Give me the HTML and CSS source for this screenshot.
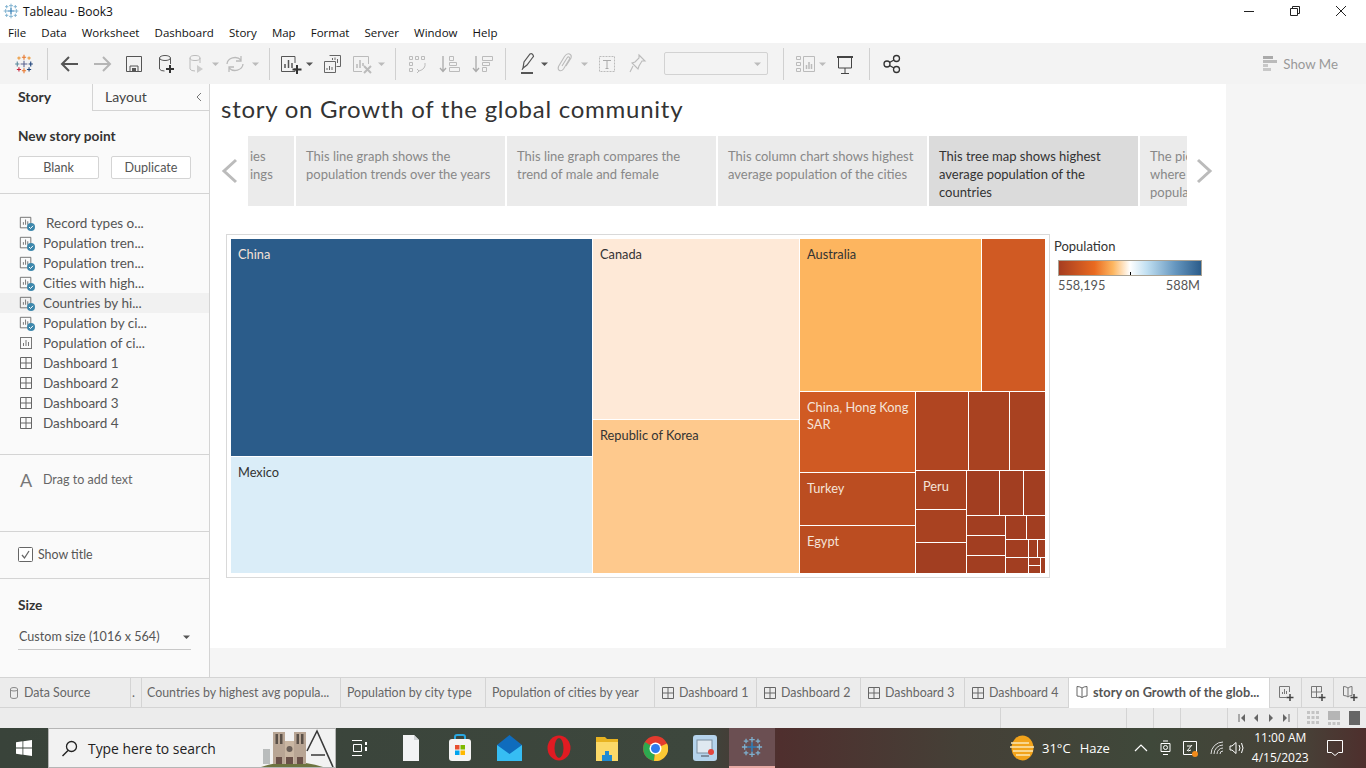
FILE: index.html
```html
<!DOCTYPE html>
<html lang="en">

<head>
  <meta charset="UTF-8">
  <title>Tableau - Book3</title>
  <link rel="stylesheet" href="styles.css">
</head>

<body>
  <svg class="defs" width="0" height="0">
    <symbol id="logo" viewBox="0 0 24 24">
      <path d="M12 1v6M9.500 4h5M12 17v6M9.500 20h5" stroke="#e8762b" stroke-width="1.300" />
      <path d="M4 9v6M1.500 12h5" stroke="#59879b" stroke-width="1.300" />
      <path d="M20 9v6M17.500 12h5" stroke="#1f447b" stroke-width="1.300" />
      <path d="M12 8v8M8 12h8" stroke="#5b6591" stroke-width="1.300" />
      <path d="M6 3v4M4 5h4M18 3v4M16 5h4" stroke="#eb912b" stroke-width="1.200" />
      <path d="M6 16v5M3.500 18.500h5" stroke="#c72037" stroke-width="1.300" />
      <path d="M18 16v5M15.500 18.500h5" stroke="#1f447b" stroke-width="1.300" />
    </symbol>
    <symbol id="blue-logo" viewBox="0 0 24 24">
      <path d="M12 1v6M9 4h6M12 17v6M9 20h6M4 9v6M1 12h6M20 9v6M17 12h6M5.500 3v5M3 5.500h5M18.500 3v5M16 5.500h5M5.500 16v5M3 18.500h5M18.500 16v5M16 18.500h5" stroke="#7eb0cf" stroke-width="1.400" />
      <path d="M12 7v10M7 12h10" stroke="#2f7cb5" stroke-width="1.800" />
    </symbol>
    <symbol id="sheet" viewBox="0 0 16 16">
      <path d="M10 13.500H1.500v-12h12V9" fill="none" stroke="#666" />
      <path d="M5 10V7M7.500 10V4M10 10V6" stroke="#666" />
    </symbol>
    <symbol id="sheet-plain" viewBox="0 0 14 14">
      <rect x="1.500" y="1.500" width="11" height="11" fill="none" stroke="#777" />
      <path d="M4.500 10V7M7 10V4M9.500 10V6" stroke="#777" />
    </symbol>
    <symbol id="grid" viewBox="0 0 14 14">
      <path d="M1.500 1.500h11v11h-11zM7 1.500v11M1.500 7h11" fill="none" stroke="#666" />
    </symbol>
    <symbol id="caret" viewBox="0 0 8 8">
      <path d="M0 2.500h7L3.500 6z" fill="currentColor" />
    </symbol>
    <symbol id="tick" viewBox="0 0 8 8">
      <circle cx="4" cy="4" r="4" fill="#3d87ab" />
      <path d="M2 4l1.500 1.500L6 2.800" fill="none" stroke="#fff" />
    </symbol>
  </svg>

  <header class="titlebar">
    <svg class="title-logo" width="16" height="16"><use href="#blue-logo" /></svg>
    <span class="title-text">Tableau - Book3</span>
    <div class="window-btns">
      <svg width="12" height="12" viewBox="0 0 12 12"><path d="M1 6.500h10" stroke="#222" /></svg>
      <svg width="12" height="12" viewBox="0 0 12 12"><path d="M1.500 3.500h7v7h-7zM3.500 3.500v-2h7v7h-2" fill="none" stroke="#222" /></svg>
      <svg width="12" height="12" viewBox="0 0 12 12"><path d="M1 1l10 10M11 1L1 11" stroke="#222" /></svg>
    </div>
  </header>

  <nav class="menubar">
    <span>File</span><span>Data</span><span>Worksheet</span><span>Dashboard</span><span>Story</span><span>Map</span><span>Format</span><span>Server</span><span>Window</span><span>Help</span>
  </nav>

  <div class="toolbar">
    <svg class="tool" viewBox="-7 -7 38 38"><use href="#logo" width="24" height="24" /></svg>
    <i class="sep ml7"></i>
    <svg class="tool ml6" viewBox="0 0 32 32"><path d="M24 16H9M15 9l-7 7 7 7" fill="none" stroke="#555" stroke-width="2" /></svg>
    <svg class="tool" viewBox="0 0 32 32"><path d="M8 16h15M17 9l7 7-7 7" fill="none" stroke="#b5b5b5" stroke-width="2" /></svg>
    <svg class="tool" viewBox="0 0 32 32"><path d="M8.500 8.500h15v15h-15zM12 23v-5h8v5" fill="none" stroke="#555" /><path d="M14 20h4v3h-4z" fill="#555" /></svg>
    <svg class="tool" viewBox="0 0 32 32"><ellipse cx="15" cy="10" rx="5.500" ry="2.500" fill="none" stroke="#555" /><path d="M9.500 10v11q1 2 5 2M20.500 10v6" fill="none" stroke="#555" /><path d="M20 17v8M16 21h8" stroke="#333" stroke-width="2" /></svg>
    <svg class="tool mln2" viewBox="0 0 32 32"><ellipse cx="15" cy="10" rx="5" ry="2.500" fill="none" stroke="#bbb" /><path d="M10 10v11q1 2 5 2M20 10v5" fill="none" stroke="#bbb" /><path d="M17 17l6 4-6 4z" fill="#ccc" /></svg>
    <svg class="caret off"><use href="#caret" /></svg>
    <svg class="tool mln1" viewBox="0 0 32 32"><path d="M8 16a8 7 0 0 1 14-4M24 16a8 7 0 0 1-14 4M22 8v5h-5M10 24v-5h5" fill="none" stroke="#bbb" stroke-width="1.300" /></svg>
    <svg class="caret off ml1"><use href="#caret" /></svg>
    <i class="sep ml9"></i>
    <svg class="tool ml4" viewBox="0 0 32 32"><path d="M21 20v3.500H7.500v-15h13.500V15" fill="none" stroke="#555" /><path d="M11 20v-4M14.500 20v-8M18 20v-5" stroke="#555" stroke-width="1.500" /><path d="M23 17v9M18.500 21.500h9" stroke="#333" stroke-width="2" /></svg>
    <svg class="caret"><use href="#caret" /></svg>
    <svg class="tool ml2" viewBox="0 0 32 32"><path d="M13.500 7.500h11v11h-4M8.500 13.500h11v11h-11z" fill="#f3f3f3" stroke="#666" /><path d="M16.500 12V10M19 12V9.500M21.500 15V11M11 22v-2M13.500 22v-4M16 22v-3" stroke="#666" /></svg>
    <svg class="tool mln3" viewBox="0 0 32 32"><path d="M17 23.500H8.500v-15h15V16" fill="none" stroke="#bbb" /><path d="M12 20v-4M15 20v-8M18 18v-3" stroke="#bbb" stroke-width="1.500" /><path d="M19 18l7 7M26 18l-7 7" stroke="#bbb" stroke-width="2" /></svg>
    <svg class="caret off ml1"><use href="#caret" /></svg>
    <i class="sep ml9"></i>
    <svg class="tool ml5" viewBox="0 0 32 32"><path d="M8.500 8.500h3v3h-3zM14.500 8.500h3v3h-3zM20.500 8.500h3v3h-3zM8.500 14.500h3v3h-3zM8.500 20.500h3v3h-3zM24 15q1 6-6 8M16 21l2 2-2 2" fill="none" stroke="#bbb" /></svg>
    <svg class="tool" viewBox="0 0 32 32"><path d="M10 8v15M7 20l3 3.500 3-3.500" fill="none" stroke="#aaa" stroke-width="1.300" /><path d="M16.500 8.500h4v4h-4zM16.500 14.500h7v3h-7zM16.500 19.500h10v4h-10z" fill="none" stroke="#bbb" /></svg>
    <svg class="tool ml1" viewBox="0 0 32 32"><path d="M10 8v15M7 20l3 3.500 3-3.500" fill="none" stroke="#aaa" stroke-width="1.300" /><path d="M16.500 8.500h10v4h-10zM16.500 14.500h7v3h-7zM16.500 19.500h4v4h-4z" fill="none" stroke="#bbb" /></svg>
    <i class="sep ml7"></i>
    <svg class="tool ml6" viewBox="0 0 32 32"><path d="M11 20l1-6 6-8q2-1 3 1t0 2l-6 8z" fill="none" stroke="#555" stroke-width="1.200" /><path d="M11 20l-1 2" stroke="#555" /><rect x="9" y="24" width="12" height="2" fill="#555" /></svg>
    <svg class="caret mln3"><use href="#caret" /></svg>
    <svg class="tool" viewBox="0 0 32 32"><path d="M13 18l5-8q1-1.500 2-1t.5 2l-6 10q-2 2.500-4 1.500t-1-4l6-10q2.500-3.500 5-2.500t1.500 4l-5 8" fill="none" stroke="#bbb" stroke-width="1.100" /></svg>
    <svg class="caret off"><use href="#caret" /></svg>
    <svg class="tool ml2" viewBox="0 0 32 32"><rect x="8.500" y="8.500" width="15" height="15" fill="none" stroke="#bbb" stroke-dasharray="2 1" /><path d="M12 12.500h8M16 12.500v8M14.500 20.500h3" fill="none" stroke="#aaa" /></svg>
    <svg class="tool mln2" viewBox="0 0 32 32"><path d="M18 7l6 6-3 0-3 5-1 3-6-6 3-1 4-4zM12 18l-3 6" fill="none" stroke="#bbb" stroke-width="1.100" /></svg>
    <div class="tool-select ml11"><svg class="caret off"><use href="#caret" /></svg></div>
    <i class="sep ml15"></i>
    <svg class="tool ml6" viewBox="0 0 32 32"><path d="M6.500 8.500h4v3h-4zM6.500 14.500h4v3h-4zM6.500 20.500h4v3h-4zM13.500 8.500h11v15h-11z" fill="none" stroke="#bbb" /><path d="M16.500 21v-4M19 21v-7M21.500 21v-5" stroke="#bbb" stroke-width="1.500" /></svg>
    <svg class="caret off mln3"><use href="#caret" /></svg>
    <svg class="tool ml2" viewBox="0 0 32 32"><path d="M8 9h16" stroke="#444" stroke-width="2" /><path d="M9.500 9v11h13V9M16 20v5M12 25.500h8" fill="none" stroke="#444" /></svg>
    <i class="sep ml8"></i>
    <svg class="tool ml6" viewBox="0 0 32 32"><circle cx="20.500" cy="10.500" r="3" fill="none" stroke="#333" stroke-width="1.300" /><circle cx="11" cy="16" r="3" fill="none" stroke="#333" stroke-width="1.300" /><circle cx="20.500" cy="21.500" r="3" fill="none" stroke="#333" stroke-width="1.300" /><path d="M13.500 14.500l4.500-2.500M13.500 17.500l4.500 2.500" stroke="#333" stroke-width="1.300" /></svg>
    <div class="show-me">
      <svg width="14" height="15" viewBox="0 0 14 15"><path d="M0 0h10v3H0z" fill="#aaa" /><path d="M0 4h14v3H0z" fill="#bbb" /><path d="M0 8h5v3H0z" fill="#c8c8c8" /><path d="M0 12h8v3H0z" fill="#c8c8c8" /></svg>
      <span>Show Me</span>
    </div>
  </div>

  <div class="workspace">
    <aside class="sidebar">
      <div class="side-tabs">
        <span class="side-tab active">Story</span>
        <span class="side-tab">Layout</span>
        <svg class="collapse" width="8" height="12" viewBox="0 0 8 12"><path d="M6 2L2 6l4 4" fill="none" stroke="#777" /></svg>
      </div>

      <section class="new-point">
        <h4>New story point</h4>
        <div class="new-btns">
          <button class="btn-blank">Blank</button>
          <button class="btn-dup">Duplicate</button>
        </div>
      </section>

      <section class="sheet-list">
        <div class="sheet-row"><svg class="si"><use href="#sheet" /></svg><svg class="tick"><use href="#tick" /></svg><span class="first">Record types o...</span></div>
        <div class="sheet-row"><svg class="si"><use href="#sheet" /></svg><svg class="tick"><use href="#tick" /></svg><span>Population tren...</span></div>
        <div class="sheet-row"><svg class="si"><use href="#sheet" /></svg><svg class="tick"><use href="#tick" /></svg><span>Population tren...</span></div>
        <div class="sheet-row"><svg class="si"><use href="#sheet" /></svg><svg class="tick"><use href="#tick" /></svg><span>Cities with high...</span></div>
        <div class="sheet-row hover"><svg class="si"><use href="#sheet" /></svg><svg class="tick"><use href="#tick" /></svg><span>Countries by hi...</span></div>
        <div class="sheet-row"><svg class="si"><use href="#sheet" /></svg><svg class="tick"><use href="#tick" /></svg><span>Population by ci...</span></div>
        <div class="sheet-row"><svg class="si"><use href="#sheet-plain" /></svg><span>Population of ci...</span></div>
        <div class="sheet-row"><svg class="si"><use href="#grid" /></svg><span>Dashboard 1</span></div>
        <div class="sheet-row"><svg class="si"><use href="#grid" /></svg><span>Dashboard 2</span></div>
        <div class="sheet-row"><svg class="si"><use href="#grid" /></svg><span>Dashboard 3</span></div>
        <div class="sheet-row"><svg class="si"><use href="#grid" /></svg><span>Dashboard 4</span></div>
      </section>

      <section class="drag-text">
        <span class="big-a">A</span>
        <span>Drag to add text</span>
      </section>

      <section class="show-title">
        <svg width="15" height="15" viewBox="0 0 15 15"><rect x=".5" y=".5" width="14" height="14" rx="1" fill="#fff" stroke="#666" /><path d="M4 8l2.500 3L11 4" fill="none" stroke="#666" stroke-width="1.300" /></svg>
        <span>Show title</span>
      </section>

      <section class="size-box">
        <h4>Size</h4>
        <div class="size-select">
          <span>Custom size (1016 x 564)</span>
          <svg class="caret"><use href="#caret" /></svg>
        </div>
      </section>
    </aside>

    <main class="canvas">
      <h1 class="story-title">story on Growth of the global community</h1>

      <div class="navigator">
        <svg class="nav-arrow" width="18" height="26" viewBox="0 0 18 26"><path d="M15 2L3 13l12 11" fill="none" stroke="#bbb" stroke-width="3" /></svg>
        <div class="nav-track">
          <div class="point point-start">ies<br>ings</div>
          <div class="point">This line graph shows the population trends over the years</div>
          <div class="point">This line graph compares the trend of male and female</div>
          <div class="point">This column chart shows highest average population of the cities</div>
          <div class="point current">This tree map shows highest average population of the countries</div>
          <div class="point point-end">The pie<br>where<br>popula</div>
        </div>
        <svg class="nav-arrow next" width="18" height="26" viewBox="0 0 18 26"><path d="M3 2l12 11L3 24" fill="none" stroke="#bbb" stroke-width="3" /></svg>
      </div>

      <div class="viz">
        <div class="chart-box">
          <div class="treemap row">
            <div class="col" style="flex-basis:361px">
              <div class="cell t-china" style="flex-basis:217px">China</div>
              <div class="cell t-mexico" style="flex-basis:116px">Mexico</div>
            </div>
            <div class="col" style="flex-basis:206px">
              <div class="cell t-canada" style="flex-basis:180px">Canada</div>
              <div class="cell t-korea" style="flex-basis:153px">Republic of Korea</div>
            </div>
            <div class="col" style="flex-basis:245px">
              <div class="row" style="flex-basis:152px">
                <div class="cell t-australia" style="flex-basis:181px">Australia</div>
                <div class="cell c1" style="flex-basis:63px"></div>
              </div>
              <div class="row" style="flex-basis:181px">
                <div class="col" style="flex-basis:115px">
                  <div class="cell c1" style="flex-basis:80px">China, Hong Kong SAR</div>
                  <div class="cell c2" style="flex-basis:52px">Turkey</div>
                  <div class="cell c2" style="flex-basis:47px">Egypt</div>
                </div>
                <div class="col" style="flex-basis:129px">
                  <div class="row" style="flex-basis:78px">
                    <div class="cell c3" style="flex-basis:52px"></div>
                    <div class="cell c4" style="flex-basis:40px"></div>
                    <div class="cell c4" style="flex-basis:35px"></div>
                  </div>
                  <div class="row" style="flex-basis:102px">
                    <div class="col" style="flex-basis:50px">
                      <div class="cell c4" style="flex-basis:38px">Peru</div>
                      <div class="cell c4" style="flex-basis:32px"></div>
                      <div class="cell c5" style="flex-basis:30px"></div>
                    </div>
                    <div class="col" style="flex-basis:78px">
                      <div class="row" style="flex-basis:44px">
                        <div class="cell c5" style="flex-basis:32px"></div>
                        <div class="cell c5" style="flex-basis:23px"></div>
                        <div class="cell c5" style="flex-basis:21px"></div>
                      </div>
                      <div class="row" style="flex-basis:57px">
                        <div class="col" style="flex-basis:38px">
                          <div class="cell c5" style="flex-basis:19px"></div>
                          <div class="cell c5" style="flex-basis:19px"></div>
                          <div class="cell c5" style="flex-basis:17px"></div>
                        </div>
                        <div class="col" style="flex-basis:39px">
                          <div class="row" style="flex-basis:23px">
                            <div class="cell c5" style="flex-basis:20px"></div>
                            <div class="cell c5" style="flex-basis:18px"></div>
                          </div>
                          <div class="row" style="flex-basis:33px">
                            <div class="col" style="flex-basis:22px">
                              <div class="cell c5" style="flex-basis:17px"></div>
                              <div class="cell c5" style="flex-basis:15px"></div>
                            </div>
                            <div class="col" style="flex-basis:16px">
                              <div class="row" style="flex-basis:17px">
                                <div class="cell c5" style="flex-basis:8px"></div>
                                <div class="cell c5" style="flex-basis:7px"></div>
                              </div>
                              <div class="row" style="flex-basis:15px">
                                <div class="col" style="flex-basis:11px">
                                  <div class="cell c5" style="flex-basis:7px"></div>
                                  <div class="cell c5" style="flex-basis:7px"></div>
                                </div>
                                <div class="cell c5" style="flex-basis:4px"></div>
                              </div>
                            </div>
                          </div>
                        </div>
                      </div>
                    </div>
                  </div>
                </div>
              </div>
            </div>
          </div>
        </div>

        <div class="legend">
          <div class="legend-title">Population</div>
          <div class="legend-bar"><i></i></div>
          <div class="legend-labels"><span>558,195</span><span>588M</span></div>
        </div>
      </div>
    </main>
  </div>

  <div class="tabs">
    <div class="tab tab-source">
      <svg width="10" height="14" viewBox="0 0 10 14"><path d="M1.500 3v8q0 1.500 3.500 1.500T8.500 11V3Q8.500 1.500 5 1.500T1.500 3zM1.500 4q1 1 3.500 1T8.500 4" fill="none" stroke="#888" /></svg>
      Data Source
    </div>
    <div class="tab tab-dot">.</div>
    <div class="tab tab-countries">Countries by highest avg popula...</div>
    <div class="tab tab-city">Population by city type</div>
    <div class="tab tab-year">Population of cities by year</div>
    <div class="tab tab-dash tab-first"><svg class="ti"><use href="#grid" /></svg>Dashboard 1</div>
    <div class="tab tab-dash"><svg class="ti"><use href="#grid" /></svg>Dashboard 2</div>
    <div class="tab tab-dash"><svg class="ti"><use href="#grid" /></svg>Dashboard 3</div>
    <div class="tab tab-dash"><svg class="ti"><use href="#grid" /></svg>Dashboard 4</div>
    <div class="tab tab-story">
      <svg class="ti" viewBox="0 0 14 14"><path d="M7 3Q5 1.500 2 1.500v9.500q3 0 5 1.500 2-1.500 5-1.500V1.500Q9 1.500 7 3zM7 3v9.500" fill="none" stroke="#666" /></svg>
      story on Growth of the glob...
    </div>
    <div class="tab tab-new">
      <svg width="18" height="18" viewBox="0 0 18 18"><path d="M9.500 13.500h-7v-11h10V8" fill="none" stroke="#777" /><path d="M5.500 10V8M7.500 10V5M9.500 10V7" stroke="#777" /><path d="M13 10v7M9.500 13.500h7" stroke="#444" stroke-width="1.500" /></svg>
    </div>
    <div class="tab tab-new">
      <svg width="18" height="18" viewBox="0 0 18 18"><path d="M9.500 13.500h-7v-11h10V8M7.500 2.500v11M2.500 8h10" fill="none" stroke="#777" /><path d="M13 10v7M9.500 13.500h7" stroke="#444" stroke-width="1.500" /></svg>
    </div>
    <div class="tab tab-new last">
      <svg width="18" height="18" viewBox="0 0 18 18"><path d="M7 4Q5 2.500 2.500 2.500v9q3 0 4.500 1.500 1.500-1.500 4-1.500V2.500Q9 2.500 7 4zM7 4v9" fill="none" stroke="#777" /><path d="M13 10v7M9.500 13.500h7" stroke="#444" stroke-width="1.500" /></svg>
    </div>
  </div>

  <div class="statusbar">
    <i class="status-cell s1"></i><i class="status-cell s2"></i><i class="status-cell s2"></i><i class="status-cell s3"></i>
    <div class="status-cell pager">
      <svg width="60" height="10" viewBox="0 0 60 10">
        <path d="M2 1v8" stroke="#666" /><path d="M8 1L4 5l4 4z" fill="#666" />
        <path d="M21 1l-4 4 4 4z" fill="#666" />
        <path d="M32 1l4 4-4 4z" fill="#666" />
        <path d="M46 1l4 4-4 4z" fill="#666" /><path d="M52 1v8" stroke="#666" />
      </svg>
    </div>
    <div class="views">
      <svg width="60" height="14" viewBox="0 0 60 14">
        <path d="M0 0h3v3H0zM4.500 0h3v3h-3zM9 0h3v3H9zM0 5h3v3H0zM4.500 5h3v3h-3zM9 5h3v3H9zM0 10h3v3H0zM4.500 10h3v3h-3zM9 10h3v3H9z" fill="#c4c4c4" />
        <path d="M21 0h12v9H21z" fill="#b5b5b5" /><path d="M21 11h3v3h-3zM25.500 11h3v3h-3zM30 11h3v3h-3z" fill="#c4c4c4" />
        <path d="M42 0h11v14H42z" fill="#666" />
      </svg>
    </div>
  </div>

  <footer class="taskbar">
    <svg class="start" width="16" height="16" viewBox="0 0 16 16"><path d="M0 2.200l6.500-.9v6.300H0zM7.300 1.200L16 0v7.600H7.300zM0 8.400h6.500v6.300L0 13.800zM7.300 8.400H16V16l-8.700-1.200z" fill="#fff" /></svg>
    <div class="search">
      <svg width="17" height="17" viewBox="0 0 17 17"><circle cx="10.500" cy="6.500" r="5" fill="none" stroke="#222" stroke-width="1.300" /><path d="M7 10.500L1.500 16" stroke="#222" stroke-width="1.500" /></svg>
      <span>Type here to search</span>
      <svg class="search-art" width="74" height="38" viewBox="0 0 74 38">
        <path d="M0 38q30-10 62 0z" fill="#6d7440" />
        <path d="M2 20h7v15H2z" fill="#b9bcbc" />
        <path d="M12 3h12v32H12zM33 3h12v32H33z" fill="#b8a594" />
        <path d="M24 12h9v23h-9z" fill="#c9b6a2" />
        <path d="M14.500 5h2.500v10h-2.500zM19 5h2.500v10H19zM35.500 5H38v10h-2.500zM40 5h2.500v10H40z" fill="#5a5048" />
        <circle cx="28.500" cy="20" r="3" fill="#6a5f58" />
        <path d="M15 28h6v7h-6zM25 28h7v7h-7zM36 28h6v7h-6z" fill="#6a5048" />
        <path d="M46 22l10-20 16 36M50 26h14" fill="none" stroke="#3a3a3a" stroke-width="1.600" />
      </svg>
    </div>

    <svg class="tb-task" width="16" height="16" viewBox="0 0 16 16"><path d="M0 .5h10M0 15.500h10M1.500 4.500h8v7h-8z" fill="none" stroke="#fff" /><path d="M13 2h2v3h-2zM13 7h2v4h-2z" fill="#fff" /></svg>
    <svg class="tb-file" width="16" height="28" viewBox="0 0 16 28"><path d="M0 1h11l5 5v21H0z" fill="#f2f3f4" /><path d="M11 1v5h5" fill="#cfd2d4" /></svg>
    <svg class="tb-store" width="24" height="28" viewBox="0 0 24 28"><path d="M7 6V3q0-2 2-2h6q2 0 2 2v3" fill="none" stroke="#29a7e0" stroke-width="2" /><rect x="1" y="5" width="22" height="22" rx="3" fill="#f4f4f4" /><path d="M7 11h4.500v4.500H7z" fill="#e8502f" /><path d="M12.500 11H17v4.500h-4.500z" fill="#7fba00" /><path d="M7 16.500h4.500V21H7z" fill="#01a4ef" /><path d="M12.500 16.500H17V21h-4.500z" fill="#ffb900" /></svg>
    <svg class="tb-mail" width="25" height="26" viewBox="0 0 25 26"><path d="M0 10L12.500 0 25 10v16H0z" fill="#0f6cbd" /><path d="M0 10l12.500 9L25 10v16H0z" fill="#36bdf3" /></svg>
    <svg class="tb-opera" width="24" height="26" viewBox="0 0 24 26"><ellipse cx="12" cy="13" rx="11.500" ry="12.500" fill="#e01b22" /><ellipse cx="12" cy="13" rx="4.500" ry="10" fill="#3f4739" /></svg>
    <svg class="tb-folder" width="22" height="26" viewBox="0 0 22 26"><path d="M0 2h9l2 2h11v6H0z" fill="#e8b321" /><path d="M0 7h22v19H0z" fill="#fbd968" /><path d="M6 20h10v6H6z" fill="#1f8ad2" /><path d="M9 16h4v4H9z" fill="#1f8ad2" /></svg>
    <svg class="tb-chrome" width="25" height="25" viewBox="0 0 25 25"><circle cx="12.500" cy="12.500" r="12.500" fill="#e33b2e" /><path d="M12.500 12.500L2 6A12.500 12.500 0 0 0 11 24.900z" fill="#2da94f" /><path d="M12.500 12.500L11 25A12.500 12.500 0 0 0 24 7.500z" fill="#fcc934" /><circle cx="12.500" cy="12.500" r="6" fill="#fff" /><circle cx="12.500" cy="12.500" r="4.500" fill="#2f7bee" /></svg>
    <svg class="tb-remote" width="24" height="26" viewBox="0 0 24 26"><rect width="24" height="26" rx="3" fill="#b5d4ec" /><rect x="4" y="5" width="15" height="13" fill="#dfe9f1" stroke="#7d8fa0" /><path d="M8 21h8" stroke="#7d8fa0" stroke-width="2" /><circle cx="18" cy="17" r="3" fill="#e2453c" /></svg>
    <div class="tb-active"><svg width="22" height="22"><use href="#blue-logo" /></svg></div>

    <div class="tray">
      <svg class="weather" width="25" height="26" viewBox="0 0 25 26"><ellipse cx="12.500" cy="13" rx="11" ry="12.500" fill="#f2a31b" /><path d="M1 8h18M0 12h24M3 16h20M6 20h14" stroke="#fbe7b4" stroke-width="1.600" /></svg>
      <span class="temp">31°C</span>
      <span class="haze">Haze</span>
      <svg class="tray-up" width="14" height="8" viewBox="0 0 14 8"><path d="M1 7l6-6 6 6" fill="none" stroke="#fff" stroke-width="1.200" /></svg>
      <svg class="tray-cam" width="12" height="16" viewBox="0 0 12 16"><path d="M1 3.500h9v8H1zM3 1h5M3 14.500h5" fill="none" stroke="#fff" /><circle cx="5.500" cy="7.500" r="2" fill="none" stroke="#fff" /></svg>
      <svg class="tray-box" width="16" height="17" viewBox="0 0 16 17"><path d="M1.500 1.500h13v13h-13z" fill="none" stroke="#fff" /><path d="M5 11l5-6M5 6h4M6 11l3-1" stroke="#fff" /><circle cx="13" cy="14" r="3" fill="#f28c1c" /></svg>
      <svg class="tray-wifi" width="14" height="14" viewBox="0 0 14 14"><path d="M1 13a12 12 0 0 1 12-12M4 13a9 9 0 0 1 9-9M7 13a6 6 0 0 1 6-6M10 13a3 3 0 0 1 3-3" fill="none" stroke="#ddd" /></svg>
      <svg class="tray-vol" width="16" height="14" viewBox="0 0 16 14"><path d="M1 5h2l4-3.500v11L3 9H1z" fill="none" stroke="#fff" /><path d="M10 4q2 3 0 6M12.500 2q3 5 0 10" fill="none" stroke="#fff" /></svg>
      <div class="clock"><span>11:00 AM</span><span>4/15/2023</span></div>
      <svg class="tray-note" width="16" height="16" viewBox="0 0 16 16"><path d="M.5 .5h15v12h-4l-3.500 3-3.500-3h-4z" fill="none" stroke="#fff" /></svg>
    </div>
  </footer>
</body>

</html>
```

FILE: styles.css
```css
* {
  box-sizing: border-box;
}

html,
body {
  margin: 0;
  height: 768px;
  overflow: hidden;
}

body {
  display: flex;
  flex-direction: column;
  width: 1366px;
  font-family: "Lato", "Open Sans", sans-serif;
  font-size: 13px;
  color: #555;
  background: #fff;
}

.defs {
  position: absolute;
}

/* title + menu */
.titlebar {
  flex: 0 0 22px;
  display: flex;
  align-items: center;
  padding-left: 3px;
  font-family: "Open Sans", sans-serif;
  font-size: 12px;
  color: #111;
}

.title-text {
  margin-left: 4px;
}

.window-btns {
  margin-left: auto;
  display: flex;
  gap: 34px;
  padding: 0 19px 0 0;
}

.window-btns svg {
  display: block;
}

.menubar {
  flex: 0 0 21px;
  display: flex;
  align-items: center;
  gap: 15.100px;
  padding-left: 8px;
  font-family: "Open Sans", sans-serif;
  font-size: 11.500px;
  color: #111;
}

/* toolbar */
.toolbar {
  flex: 0 0 41px;
  display: flex;
  align-items: center;
  padding-left: 8px;
  background: #f3f3f3;
}

.tool {
  flex: 0 0 32px;
  width: 32px;
  height: 32px;
}

.caret {
  flex: 0 0 8px;
  width: 8px;
  height: 8px;
  color: #555;
}

.caret.off {
  color: #bbb;
}

.sep {
  flex: 0 0 1px;
  height: 32px;
  background: #d0d0d0;
}

.ml1 { margin-left: 1px; }
.ml2 { margin-left: 2px; }
.ml4 { margin-left: 4px; }
.ml5 { margin-left: 5px; }
.ml6 { margin-left: 6px; }
.ml7 { margin-left: 7px; }
.ml8 { margin-left: 8px; }
.ml9 { margin-left: 9px; }
.ml11 { margin-left: 11px; }
.ml15 { margin-left: 15px; }
.mln1 { margin-left: -1px; }
.mln2 { margin-left: -2px; }
.mln3 { margin-left: -3px; }

.tool-select {
  flex: 0 0 104px;
  height: 23px;
  display: flex;
  align-items: center;
  justify-content: flex-end;
  padding-right: 5px;
  border: 1px solid #d2d2d2;
  border-radius: 2px;
}

.show-me {
  margin-left: auto;
  display: flex;
  align-items: center;
  gap: 6px;
  padding-right: 28px;
  font-size: 13.300px;
  color: #999;
}

/* main area */
.workspace {
  flex: 0 0 593px;
  display: flex;
  background: #f5f5f5;
}

.sidebar {
  flex: 0 0 210px;
  display: flex;
  flex-direction: column;
  background: #fafafa;
  border-right: 1px solid #d4d4d4;
}

.side-tabs {
  flex: 0 0 26px;
  display: flex;
  position: relative;
  font-size: 14px;
  line-height: 26px;
}

.side-tab {
  flex: 1;
  padding-left: 12px;
  border-left: 1px solid #d4d4d4;
  border-bottom: 1px solid #d4d4d4;
  color: #444;
}

.side-tab.active {
  flex: 0 0 92px;
  padding-left: 18px;
  border: 0;
  font-weight: 700;
  color: #333;
}

.collapse {
  position: absolute;
  right: 6px;
  top: 7px;
}

.new-point {
  flex: 0 0 83px;
  padding: 17px 18px 0;
  border-bottom: 1px solid #d4d4d4;
}

h4 {
  margin: 0;
  font-size: 13.700px;
  line-height: 16px;
  font-weight: 700;
  color: #333;
}

.new-btns {
  display: flex;
  gap: 12px;
  margin-top: 12px;
}

.new-btns button {
  height: 23px;
  padding: 0;
  border: 1px solid #d4d4d4;
  border-radius: 2px;
  background: #fff;
  font: 12.600px "Lato", sans-serif;
  color: #555;
}

.btn-blank {
  width: 81px;
}

.btn-dup {
  width: 80px;
}

.sheet-list {
  flex: 0 0 261px;
  padding-top: 19px;
  border-bottom: 1px solid #d4d4d4;
}

.sheet-row {
  position: relative;
  display: flex;
  align-items: center;
  height: 20px;
  padding-left: 19px;
  font-size: 13.500px;
  color: #555;
}

.sheet-row.hover {
  background: #f1f1f1;
}

.si {
  flex: 0 0 14px;
  width: 14px;
  height: 14px;
  margin-right: 10px;
}

.first {
  margin-left: 3px;
}

.tick {
  position: absolute;
  left: 27px;
  top: 10px;
  width: 8px;
  height: 8px;
}

.drag-text {
  flex: 0 0 77px;
  display: flex;
  align-items: flex-start;
  gap: 12px;
  padding: 15px 0 0 20px;
  border-bottom: 1px solid #d4d4d4;
  font-size: 12.500px;
}

.drag-text span {
  line-height: 20px;
  color: #666;
}

.drag-text .big-a {
  width: 11px;
  font-size: 18px;
  color: #777;
}

.show-title {
  flex: 0 0 47px;
  display: flex;
  align-items: center;
  gap: 5px;
  padding: 0 0 2px 18px;
  border-bottom: 1px solid #d4d4d4;
  font-size: 12.400px;
}

.size-box {
  padding: 18px 18px 0;
}

.size-select {
  display: flex;
  align-items: center;
  justify-content: space-between;
  height: 28px;
  margin-top: 9px;
  padding: 2px 0 0 1px;
  border-bottom: 1px solid #c8c8c8;
  font-size: 12.600px;
}

/* story canvas */
.canvas {
  flex: 0 0 1016px;
  height: 564px;
  background: #fff;
}

.story-title {
  height: 52px;
  margin: 0;
  padding-left: 11px;
  font-size: 24px;
  line-height: 50px;
  letter-spacing: .74px;
  font-weight: 400;
  color: #333;
}

.navigator {
  display: flex;
  align-items: center;
  padding-left: 11px;
}

.nav-arrow {
  flex: 0 0 18px;
  margin-right: 8px;
}

.nav-arrow.next {
  margin: 0 0 0 8px;
}

.nav-track {
  flex: 0 0 939px;
  display: flex;
  gap: 2px;
  height: 70px;
  margin-left: 1px;
  overflow: hidden;
}

.point {
  flex: 0 0 209px;
  padding: 11px 10px 0;
  background: #ebebeb;
  line-height: 18px;
  color: #888;
}

.point.current {
  background: #dbdbdb;
  color: #333;
}

.point-start {
  flex-basis: 46px;
  padding-left: 2px;
  padding-right: 0;
}

.point-end {
  flex-basis: 47px;
  padding-right: 0;
  white-space: nowrap;
  overflow: hidden;
}

.viz {
  display: flex;
  margin: 28px 0 0 16px;
}

.chart-box {
  width: 824px;
  height: 344px;
  padding: 4px;
  border: 1px solid #d9d9d9;
}

.treemap {
  width: 814px;
  height: 334px;
}

.row,
.col {
  display: flex;
  gap: 1px;
  flex-grow: 0;
  flex-shrink: 0;
}

.col {
  flex-direction: column;
}

.cell {
  flex-grow: 0;
  flex-shrink: 0;
  padding: 7px 0 0 7px;
  font-size: 12.800px;
  line-height: 17px;
  overflow: hidden;
  color: #f5e3d8;
}

.cell:empty {
  padding: 0;
}

.t-china { background: #2b5c8a; }
.t-mexico { background: #daedf8; color: #333; }
.t-canada { background: #fee9d7; color: #333; }
.t-korea { background: #fec98d; color: #333; }
.t-australia { background: #fdb55f; color: #333; }
.c1 { background: #d05a23; }
.c2 { background: #bb4d21; }
.c3 { background: #b04521; }
.c4 { background: #a94221; }
.c5 { background: #a23e21; }

.legend {
  width: 152px;
  padding: 4px 0 0 4px;
}

.legend-title {
  line-height: 16px;
  color: #333;
}

.legend-bar {
  position: relative;
  width: 144px;
  height: 16px;
  margin: 6px 0 0 4px;
  border: 1px solid #a9a294;
  background: linear-gradient(to right, #a63d20, #e96a20 25%, #fdb660 38%, #fff 50%, #c0dff1 62%, #6596bf 82%, #2b5c8a);
}

.legend-bar i {
  position: absolute;
  left: 71px;
  bottom: 0;
  width: 1px;
  height: 3px;
  background: #000;
}

.legend-labels {
  display: flex;
  justify-content: space-between;
  width: 142px;
  margin-left: 4px;
  font-size: 12.800px;
  line-height: 18px;
}

/* sheet tabs */
.tabs {
  flex: 0 0 31px;
  display: flex;
  background: #ececec;
  border-top: 1px solid #d4d4d4;
  border-bottom: 1px solid #d4d4d4;
  font-size: 12.400px;
}

.tab {
  flex: 0 0 auto;
  display: flex;
  align-items: center;
  padding-left: 9px;
  border-right: 1px solid #d4d4d4;
  white-space: nowrap;
  overflow: hidden;
  color: #666;
}

.tab-source { width: 131px; gap: 5px; }
.tab-dot { width: 11px; padding-left: 1px; }
.tab-countries { width: 199px; padding-left: 5px; }
.tab-city { width: 145px; padding-left: 6px; }
.tab-year { width: 169px; padding-left: 6px; }
.tab-dash { width: 104px; padding-left: 6px; }
.tab-first { width: 102px; }

.ti {
  flex: 0 0 14px;
  width: 14px;
  height: 14px;
  margin-right: 4px;
}

.tab-story {
  width: 201px;
  padding: 0 0 3px 6px;
  background: #fff;
  font-size: 12.800px;
  font-weight: 700;
  color: #555;
  margin-bottom: -1px;
}

.tab-new {
  width: 32px;
  padding-left: 7px;
}

.tab-new.last {
  border-right: 0;
}

/* status */
.statusbar {
  flex: 0 0 20px;
  display: flex;
  background: #ececec;
  padding-left: 1000px;
}

.status-cell {
  border-left: 1px solid #d4d4d4;
}

.s1 { flex: 0 0 126px; }
.s2 { flex: 0 0 27px; }
.s3 { flex: 0 0 47px; }

.pager {
  flex: 0 0 71px;
  display: flex;
  align-items: center;
  padding-left: 9px;
  border-right: 1px solid #d4d4d4;
}

.views {
  padding: 3px 0 0 9px;
}

/* windows taskbar */
.taskbar {
  flex: 0 0 40px;
  position: relative;
  display: flex;
  align-items: center;
  color: #fff;
  background: linear-gradient(to right, #39433a 0, #3d473d 700px, #4f2f2e 780px, #454037 960px, #3f483a 1150px, #474238 1300px, #4e2f2d 1366px);
}

.start {
  margin-left: 16px;
}

.search {
  flex: 0 0 288px;
  height: 40px;
  display: flex;
  align-items: center;
  margin-left: 16px;
  padding-left: 12px;
  gap: 10px;
  background: #f2f2f2;
  border: 1px solid #b5b5b5;
  color: #222;
  font-family: "Open Sans", sans-serif;
  font-size: 13.900px;
  position: relative;
}

.search-art {
  position: absolute;
  right: 0;
  bottom: 0;
}

.tb-task { margin-left: 16px; }
.tb-file { margin-left: 35px; }
.tb-store { margin-left: 29px; }
.tb-mail { margin-left: 25px; }
.tb-opera { margin-left: 25px; }
.tb-folder { margin-left: 25px; }
.tb-chrome { margin-left: 25px; }
.tb-remote { margin-left: 25px; }

.tb-active {
  flex: 0 0 46px;
  height: 40px;
  margin-left: 12px;
  display: flex;
  align-items: center;
  justify-content: center;
  background: #6b4f52;
  border-bottom: 2px solid #e7a9a4;
}

.tray {
  position: absolute;
  left: 1010px;
  right: 0;
  top: 0;
  height: 40px;
  display: flex;
  align-items: center;
  font-family: "Open Sans", sans-serif;
  font-size: 13px;
}

.temp { margin-left: 7px; }
.haze { margin-left: 9px; }
.tray-up { margin-left: 24px; }
.tray-cam { margin-left: 12px; }
.tray-box { margin-left: 10px; }
.tray-wifi { margin-left: 12px; }
.tray-vol { margin-left: 5px; }

.clock {
  display: flex;
  flex-direction: column;
  align-items: center;
  margin-left: 7px;
  font-size: 12px;
  line-height: 20px;
}

.tray-note {
  margin-left: 18px;
}
```
